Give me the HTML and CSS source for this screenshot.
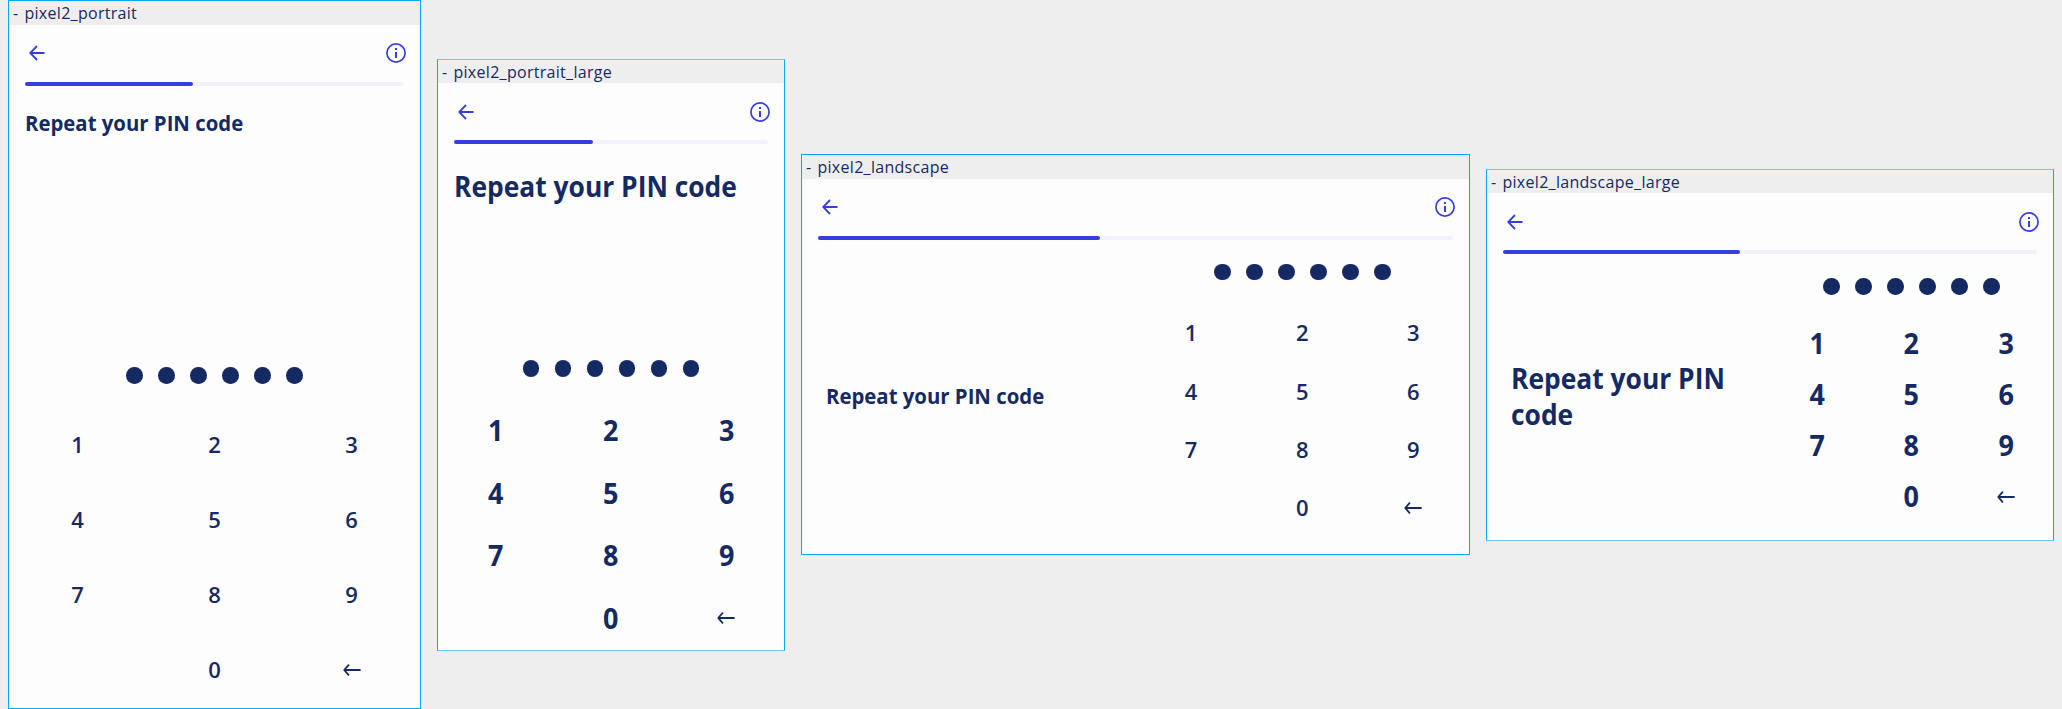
FILE: index.html
```html
<!DOCTYPE html>
<html lang="en">
<head>
<meta charset="utf-8">
<title>Repeat your PIN code</title>
<link rel="stylesheet" href="styles.css">
</head>
<body>
<svg class="defs" width="0" height="0">
  <symbol id="back" viewBox="0 0 16 16"><path d="M15.5 8H1.2M8 1L1.2 8L8 15" fill="none" stroke="currentColor" stroke-width="1.8"/></symbol>
  <symbol id="info" viewBox="0 0 20 20"><circle cx="10" cy="10" r="9.1" fill="none" stroke="currentColor" stroke-width="1.7"/><path d="M9 5h2v2H9zM9 9h2v6H9z" fill="currentColor"/></symbol>
  <symbol id="erase" viewBox="0 0 18 12"><path d="M17 6H1.4M5.5 1.2L1.2 6L5.5 10.8" fill="none" stroke="currentColor" stroke-width="1.8" stroke-linecap="round" stroke-linejoin="round"/></symbol>
</svg>
<main class="board">
  <section class="frame portrait">
    <div class="label">- <span>pixel2_portrait</span></div>
    <header class="bar"><svg class="back"><use href="#back"/></svg><svg class="info"><use href="#info"/></svg></header>
    <div class="track"><div class="fill"></div></div>
    <div class="content">
      <h1 class="title"><span>Repeat your PIN code</span></h1>
      <div class="entry">
        <div class="dots"><i></i><i></i><i></i><i></i><i></i><i></i></div>
        <div class="keys"><b>1</b><b>2</b><b>3</b><b>4</b><b>5</b><b>6</b><b>7</b><b>8</b><b>9</b><b></b><b>0</b><b class="key-erase"><svg class="erase"><use href="#erase"/></svg></b></div>
      </div>
    </div>
  </section>
  <section class="frame portrait-large large">
    <div class="label">- <span>pixel2_portrait_large</span></div>
    <header class="bar"><svg class="back"><use href="#back"/></svg><svg class="info"><use href="#info"/></svg></header>
    <div class="track"><div class="fill"></div></div>
    <div class="content">
      <h1 class="title"><span>Repeat your PIN code</span></h1>
      <div class="entry">
        <div class="dots"><i></i><i></i><i></i><i></i><i></i><i></i></div>
        <div class="keys"><b>1</b><b>2</b><b>3</b><b>4</b><b>5</b><b>6</b><b>7</b><b>8</b><b>9</b><b></b><b>0</b><b class="key-erase"><svg class="erase"><use href="#erase"/></svg></b></div>
      </div>
    </div>
  </section>
  <section class="frame landscape">
    <div class="label">- <span>pixel2_landscape</span></div>
    <header class="bar"><svg class="back"><use href="#back"/></svg><svg class="info"><use href="#info"/></svg></header>
    <div class="track"><div class="fill"></div></div>
    <div class="content">
      <h1 class="title"><span>Repeat your PIN code</span></h1>
      <div class="entry">
        <div class="dots"><i></i><i></i><i></i><i></i><i></i><i></i></div>
        <div class="keys"><b>1</b><b>2</b><b>3</b><b>4</b><b>5</b><b>6</b><b>7</b><b>8</b><b>9</b><b></b><b>0</b><b class="key-erase"><svg class="erase"><use href="#erase"/></svg></b></div>
      </div>
    </div>
  </section>
  <section class="frame landscape-large large">
    <div class="label">- <span>pixel2_landscape_large</span></div>
    <header class="bar"><svg class="back"><use href="#back"/></svg><svg class="info"><use href="#info"/></svg></header>
    <div class="track"><div class="fill"></div></div>
    <div class="content">
      <h1 class="title"><span>Repeat your PIN<br>code</span></h1>
      <div class="entry">
        <div class="dots"><i></i><i></i><i></i><i></i><i></i><i></i></div>
        <div class="keys"><b>1</b><b>2</b><b>3</b><b>4</b><b>5</b><b>6</b><b>7</b><b>8</b><b>9</b><b></b><b>0</b><b class="key-erase"><svg class="erase"><use href="#erase"/></svg></b></div>
      </div>
    </div>
  </section>
</main>
</body>
</html>
```
FILE: styles.css
```css
* { box-sizing: border-box; }
body {
  margin: 0;
  background: #eeeeee;
  color: #152a62;
  font-family: "Open Sans", "Noto Sans", sans-serif;
  overflow: hidden;
}
.defs { display: block; position: absolute; }
svg { display: block; }
.board {
  display: flex;
  align-items: flex-start;
  gap: 16px;
  height: 709px;
  padding-left: 8px;
}
.frame {
  --label: 24px;
  --pitch: 75px;
  --digit: 22px;
  --squeeze: 0.925;
  flex: none;
  display: flex;
  flex-direction: column;
  background: #fdfdfd;
  border: 1px solid #03a9f4;
}
.large {
  --label: 23px;
  --digit: 29px;
  --squeeze: 0.91;
  border-top-color: #6ccaf3;
  border-bottom-color: #6ccaf3;
}
.portrait { width: 413px; height: 709px; }
.portrait-large { width: 348px; height: 592px; margin-top: 59px; --pitch: 62.5px; }
.landscape { width: 669px; height: 401px; margin-top: 154px; --pitch: 58.4px; }
.landscape-large { width: 568px; height: 372px; margin-top: 169px; --pitch: 51.2px; }
.label {
  flex: none;
  height: var(--label);
  padding-left: 4px;
  background: #eeeeee;
  font-size: 16px;
  letter-spacing: 0.3px;
  word-spacing: 1.5px;
  line-height: 25px;
  white-space: nowrap;
  overflow: hidden;
}
.bar {
  flex: none;
  display: flex;
  justify-content: space-between;
  align-items: center;
  height: 56px;
  padding: 0 14px 0 20px;
  color: #373ede;
}
.large .bar { height: 57px; }
.back { width: 16px; height: 16px; }
.info { width: 20px; height: 20px; }
.erase { width: 18px; height: 12px; margin-top: 2px; }
.track {
  flex: none;
  height: 4px;
  margin: 0.5px 16px 0;
  border-radius: 2px;
  background: #f2f2fb;
}
.large .track { margin-top: 0; }
.fill { width: 44.4%; height: 4px; border-radius: 2px; background: #373ede; }
.content { flex: 1; display: flex; flex-direction: column; }
.title { margin: 0; font-size: var(--digit); line-height: 28px; font-weight: 700; white-space: nowrap; }
.title span { display: inline-block; transform: scaleX(var(--squeeze)); transform-origin: 0 50%; }
.large .title { line-height: 36px; }
.portrait .title { padding: 22px 16px 0; }
.portrait-large .title { padding: 24px 16px 0; }
.entry { margin-top: auto; }
.dots { display: flex; justify-content: center; gap: 15.5px; }
.dots i { width: 16.5px; height: 16.5px; border-radius: 50%; background: #152a62; }
.keys { display: grid; grid-template-columns: repeat(3, 1fr); grid-auto-rows: var(--pitch); }
.keys b {
  display: flex;
  align-items: center;
  justify-content: center;
  font-size: var(--digit);
  line-height: 1;
  font-weight: 600;
}
.large .keys b { font-weight: 700; transform: scaleX(0.93); }
.large .keys .key-erase { transform: none; }
.portrait .keys { padding-top: 23px; }
.portrait-large .keys { padding-top: 22px; }
.portrait .entry { padding-bottom: 1.5px; }
.portrait-large .entry { padding-bottom: 1.5px; }
.landscape .content, .landscape-large .content { flex-direction: row; align-items: center; }
.landscape .title, .landscape-large .title { flex: 1 1 0; width: 0; padding-left: 24px; }
.landscape .title { padding-bottom: 3px; }
.landscape-large .title { padding-bottom: 2px; }
.landscape .entry, .landscape-large .entry { flex: none; width: 50%; height: 100%; margin: 0; padding-top: 24px; }
.landscape .keys { padding-top: 23px; }
.landscape-large .keys { padding-top: 22px; }
```
